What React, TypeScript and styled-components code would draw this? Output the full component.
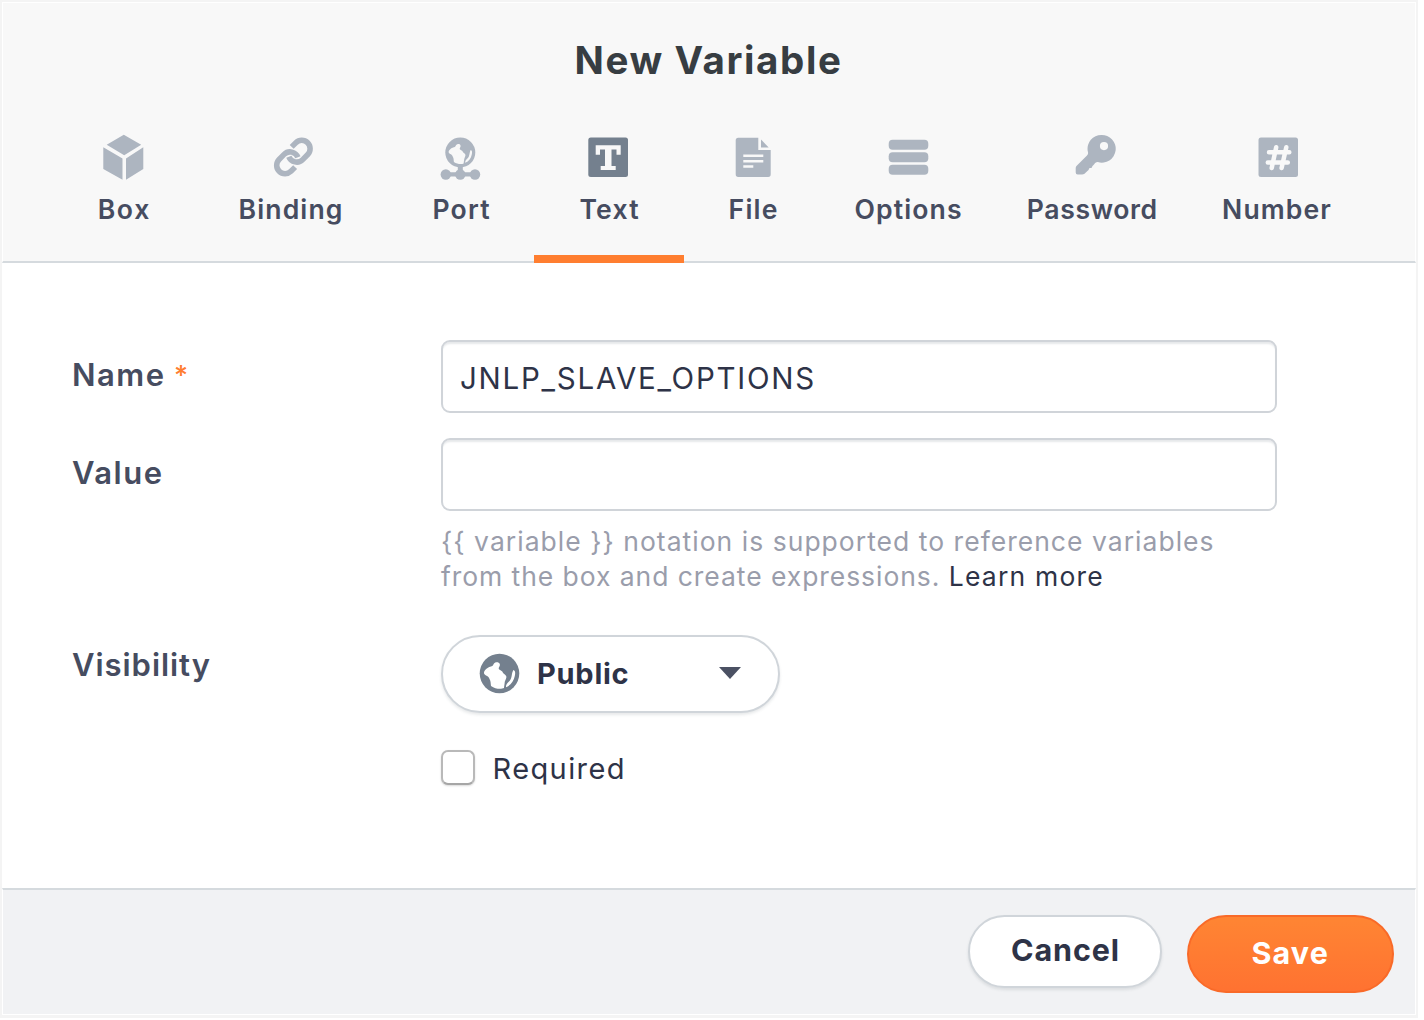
import React from 'react';
import styled, { createGlobalStyle, css } from 'styled-components';

const color = {
  ink: '#2e3347',
  label: '#464c60',
  title: '#373d42',
  muted: '#9a9dab',
  line: '#d5dade',
  icon: '#adb5c0',
  iconActive: '#74808e',
  orange: '#ff7e30',
};

const GlobalStyle = createGlobalStyle`
  *, *::before, *::after { box-sizing: border-box; }
  body {
    margin: 0;
    background: #fff;
    font-family: Inter, "Liberation Sans", sans-serif;
    -webkit-font-smoothing: antialiased;
  }
`;

const Frame = styled.div`
  width: 1418px;
  height: 1018px;
  border: 2px solid #f4f4f4;
  border-bottom-width: 3px;
  background: #fff;
  display: flex;
  flex-direction: column;
`;

const Header = styled.header`
  height: 260px;
  margin-top: 1px;
  display: flex;
  flex-direction: column;
  background: #f8f8f8;
  border-bottom: 2px solid ${color.line};
  border-left: 1px solid #fff;
  border-right: 1px solid #fff;
`;

const Title = styled.h1`
  margin: 32px 0 0;
  padding-right: 1px;
  height: 50px;
  font-size: 38.5px;
  line-height: 50px;
  font-weight: 700;
  letter-spacing: 1.6px;
  text-align: center;
  color: ${color.title};
`;

const Tabs = styled.nav`
  flex: 1;
  margin: 0 0 -2px 51px;
  display: grid;
  grid-template-columns: 139px 195px 146px 150px 138px 172px 196px 173px;
`;

const Tab = styled.button<{ $active?: boolean }>`
  display: flex;
  flex-direction: column;
  align-items: center;
  padding: 49px 0 0;
  border: 0;
  border-bottom: 8px solid ${(p) => (p.$active ? color.orange : 'transparent')};
  background: none;
  font-family: inherit;
  color: ${(p) => (p.$active ? color.iconActive : color.icon)};
`;

const TabIcon = styled.svg`
  display: block;
  width: 48px;
  height: 48px;
  flex: none;
`;

const TabLabel = styled.span<{ $tracking: number }>`
  margin-top: 12px;
  font-size: 26.6px;
  line-height: 30px;
  font-weight: 600;
  letter-spacing: ${(p) => p.$tracking}px;
  margin-right: ${(p) => -p.$tracking}px;
  white-space: nowrap;
  color: ${color.label};
`;

const Form = styled.form`
  flex: 1;
  padding: 77px 0 0 70px;
  display: flex;
  flex-direction: column;
`;

const Row = styled.div<{ $gap?: number }>`
  display: grid;
  grid-template-columns: 369px 836px;
  margin-bottom: ${(p) => p.$gap ?? 0}px;
`;

const FieldLabel = styled.label<{ $tracking?: number; $line?: number }>`
  height: 72px;
  font-size: 31px;
  line-height: ${(p) => p.$line ?? 70}px;
  font-weight: 600;
  letter-spacing: ${(p) => p.$tracking ?? 1.5}px;
  color: ${color.label};
`;

const Star = styled.span`
  margin-left: -1px;
  font-size: 27px;
  font-weight: 500;
  line-height: 1;
  vertical-align: 1px;
  color: ${color.orange};
`;

const Input = styled.input`
  display: block;
  width: 836px;
  height: 73px;
  padding: 2px 18px 0 17px;
  border: 2px solid #d0d4d9;
  border-radius: 9px;
  background: #fff;
  box-shadow: inset 0 3px 2px -1px #e6e8ea;
  font-family: inherit;
  font-size: 29.5px;
  font-weight: 400;
  letter-spacing: 1.75px;
  color: ${color.ink};
  outline: none;
`;

const Hint = styled.p`
  margin: 13.4px 0 0;
  font-size: 26.5px;
  line-height: 34.6px;
  letter-spacing: 1.02px;
  white-space: nowrap;
  color: ${color.muted};
`;

const HintLine = styled.span`
  display: block;
  letter-spacing: 0.94px;
`;

const HintLink = styled.a`
  letter-spacing: 1.2px;
  color: ${color.ink};
`;

const pill = css`
  display: flex;
  align-items: center;
  border: 2px solid #d0d5da;
  border-radius: 40px;
  background: #fff;
  font-family: inherit;
  font-weight: 700;
  color: ${color.ink};
`;

const Select = styled.button`
  ${pill}
  width: 339px;
  height: 78px;
  padding: 0 37px 1px 36px;
  box-shadow: 0 2px 3px rgba(60, 70, 80, 0.12);
  font-size: 29px;
  letter-spacing: 0.75px;
`;

const SelectText = styled.span`
  flex: 1;
  margin-left: 17px;
  text-align: left;
`;

const CheckRow = styled.label`
  margin: 38px 0 0 369px;
  display: flex;
  align-items: center;
  height: 36px;
  gap: 17.5px;
  font-size: 29px;
  letter-spacing: 1.4px;
  color: ${color.ink};
`;

const Check = styled.input`
  appearance: none;
  width: 34px;
  height: 35px;
  margin: 0 0 2px;
  border: 2px solid #b9b9b9;
  border-bottom-color: #a6a6a6;
  border-radius: 7px;
  background: #fff;
  box-shadow: 0 1px 2px rgba(0, 0, 0, 0.15);
`;

const Footer = styled.footer`
  height: 126px;
  margin-bottom: 1px;
  padding: 25px 21.5px 0 0;
  display: flex;
  justify-content: flex-end;
  align-items: flex-start;
  gap: 25px;
  border-top: 2px solid ${color.line};
  border-left: 1px solid #fff;
  border-right: 1px solid #fff;
  background: #f1f2f4;
`;

const Cancel = styled.button`
  ${pill}
  justify-content: center;
  width: 194px;
  height: 73px;
  padding: 0 0 4px 1px;
  box-shadow: 0 2px 3px rgba(60, 70, 80, 0.12);
  font-size: 30.5px;
  letter-spacing: 0.9px;
`;

const Save = styled.button`
  ${pill}
  justify-content: center;
  width: 206.5px;
  height: 78px;
  padding: 0 0 4px;
  border-color: #f96a28;
  background: linear-gradient(#ff8533, #ff7231);
  font-size: 30.5px;
  letter-spacing: 1.1px;
  color: #fff;
`;

/* Land masses of the globe, drawn on a disc of radius 20 around the origin. */
const Land = ({ fill }: { fill: string }) => (
  <g fill={fill}>
    <path d="M-14.700 -3C-13 -5 -11 -6.500 -8.500 -7C-6.500 -7.300 -6.500 -8.500 -5.500 -10C-4 -12 -0.500 -11.800 0.300 -9.500C1 -7.500 -1 -6.500 -0.800 -4.800C-0.500 -3.500 1.500 -3.500 2.800 -2C3.500 0 5 0.500 6.500 2.200C7.800 4 5.500 6.500 5.200 9C5 11.500 4.500 13.500 4.500 14.500C2 15.800 -4 15.800 -8.500 12.500C-9 10 -8.500 8 -10 5.500C-10.500 3.500 -12 2.500 -13.500 2C-15.500 1 -16.300 -1 -14.700 -3Z" />
    <path d="M13.800 -3.500C15.800 -3 16 -0.500 15.300 2.500C14.300 7.500 11.500 11.500 6.500 13.800C6.300 11.500 7.500 9.800 9.500 8C12.500 5.500 12 1 13 -1.500Z" />
  </g>
);

const BoxIcon = () => (
  <TabIcon viewBox="0 0 48 48" fill="currentColor">
    <path d="M23.800 0.700L41.200 10.700L24.200 21.300L6.700 10.700ZM3.300 13.300L22.500 24.500V45.700L3.300 35ZM26 24.500L43.300 13.300V35L26 45.700Z" />
  </TabIcon>
);

const BindingIcon = () => (
  <TabIcon viewBox="0 0 48 48" fill="none" stroke="currentColor" strokeWidth="3.300">
    <g transform="translate(26.400 23) scale(1.680) translate(-12 -12)">
      <path d="M9.300 11.800a5 5 0 0 0 8.240 1.740l3-3a5 5 0 0 0-7.070-7.070l-2.500 2.500" />
      <path d="M14.700 12.200a5 5 0 0 0-8.240-1.740l-3 3a5 5 0 0 0 7.070 7.070l2.500-2.500" />
    </g>
  </TabIcon>
);

const PortIcon = () => (
  <TabIcon viewBox="0 0 48 48" fill="currentColor">
    <circle cx="23.300" cy="18.500" r="15" />
    <g transform="translate(23.300 18.500) scale(0.750)">
      <Land fill="#f8f8f8" />
    </g>
    <path d="M20.800 32H25.800V38.300H38V42.500H9V38.300H20.800Z" />
    <circle cx="8.800" cy="40.500" r="5.200" />
    <circle cx="23.300" cy="40.500" r="5.200" />
    <circle cx="38" cy="40.500" r="5.200" />
  </TabIcon>
);

const TextIcon = () => (
  <TabIcon viewBox="0 0 48 48" fill="currentColor">
    <rect x="3.300" y="3.600" width="39.700" height="39.500" rx="2.500" />
    <path
      fill="#f8f8f8"
      d="M10.700 11.300H35.700V20.700H31.500V15.500H26.500V32H30.700V36H15.700V32H20V15.500H15V20.700H10.700Z"
    />
  </TabIcon>
);

const FileIcon = () => (
  <TabIcon viewBox="0 0 48 48" fill="currentColor">
    <path d="M9.200 3.700H29.300V16H41.700V40.200Q41.700 42.900 39.200 42.900H9.200Q6.700 42.900 6.700 40.200V6.200Q6.700 3.700 9.200 3.700Z" />
    <path d="M32 5.500L39.700 13.500H32Z" />
    <path
      stroke="#f8f8f8"
      strokeWidth="2.400"
      d="M14.300 21.700H34.300M14.300 27.300H34.300M14.300 32.500H24.300"
    />
  </TabIcon>
);

const OptionsIcon = () => (
  <TabIcon viewBox="0 0 48 48" fill="currentColor">
    <rect x="4.700" y="5.800" width="39.600" height="10" rx="4" />
    <rect x="4.700" y="18.300" width="39.600" height="10" rx="4" />
    <rect x="4.700" y="30.800" width="39.600" height="10" rx="4" />
  </TabIcon>
);

const KeyIcon = () => (
  <TabIcon viewBox="0 0 48 48" fill="currentColor">
    <path
      fillRule="evenodd"
      d="M33.300 0.900A13.900 13.900 0 1 1 29.800 28.100C28 28 27 29.500 26 30.500L24.500 32L23.500 34H21.500L20.500 36L16.500 39.700Q15.500 40.500 14 40.500H9.700Q7.700 40.500 7.700 38.500V34Q7.700 32.800 8.700 31.800L19 21.500C20.500 20 20.200 18.500 19.700 17A13.900 13.900 0 0 1 33.300 0.900ZM36 8A4.100 4.100 0 1 0 36 16.200A4.100 4.100 0 1 0 36 8Z"
    />
  </TabIcon>
);

const NumberIcon = () => (
  <TabIcon viewBox="0 0 48 48" fill="currentColor">
    <rect x="5.500" y="3.600" width="39.500" height="39.500" rx="2.500" />
    <path
      stroke="#f8f8f8"
      strokeWidth="4.500"
      strokeLinecap="round"
      d="M23.200 13.200L18.700 34M33.300 13.200L28.600 34M16 18.200H36.300M14.800 28.500H34.800"
    />
  </TabIcon>
);

const GlobeIcon = () => (
  <svg width="41" height="41" viewBox="-20.500 -20.500 41 41">
    <circle r="19.800" fill="#74808e" />
    <Land fill="#fff" />
  </svg>
);

const Caret = () => (
  <svg width="22" height="13" viewBox="0 0 22 13">
    <path d="M0 0H22L11 12Z" fill="#4b5163" />
  </svg>
);

const tabs = [
  { name: 'Box', Icon: BoxIcon, tracking: 1.7 },
  { name: 'Binding', Icon: BindingIcon, tracking: 1.1 },
  { name: 'Port', Icon: PortIcon, tracking: 1.2 },
  { name: 'Text', Icon: TextIcon, tracking: 1.2 },
  { name: 'File', Icon: FileIcon, tracking: 1.2 },
  { name: 'Options', Icon: OptionsIcon, tracking: 1.1 },
  { name: 'Password', Icon: KeyIcon, tracking: 0.6 },
  { name: 'Number', Icon: NumberIcon, tracking: 1.1 },
];

export default function App() {
  return (
    <>
      <GlobalStyle />
      <Frame>
        <Header>
          <Title>New Variable</Title>
          <Tabs>
            {tabs.map(({ name, Icon, tracking }) => (
              <Tab key={name} $active={name === 'Text'}>
                <Icon />
                <TabLabel $tracking={tracking}>{name}</TabLabel>
              </Tab>
            ))}
          </Tabs>
        </Header>
        <Form>
          <Row $gap={25}>
            <FieldLabel htmlFor="name">
              Name <Star>*</Star>
            </FieldLabel>
            <Input id="name" defaultValue="JNLP_SLAVE_OPTIONS" />
          </Row>
          <Row $gap={41}>
            <FieldLabel htmlFor="value">Value</FieldLabel>
            <div>
              <Input id="value" />
              <Hint>
                {'{{ variable }} notation is supported to reference variables'}
                <HintLine>
                  from the box and create expressions. <HintLink>Learn more</HintLink>
                </HintLine>
              </Hint>
            </div>
          </Row>
          <Row>
            <FieldLabel $tracking={0.95} $line={60}>
              Visibility
            </FieldLabel>
            <Select type="button">
              <GlobeIcon />
              <SelectText>Public</SelectText>
              <Caret />
            </Select>
          </Row>
          <CheckRow>
            <Check type="checkbox" />
            Required
          </CheckRow>
        </Form>
        <Footer>
          <Cancel>Cancel</Cancel>
          <Save>Save</Save>
        </Footer>
      </Frame>
    </>
  );
}
